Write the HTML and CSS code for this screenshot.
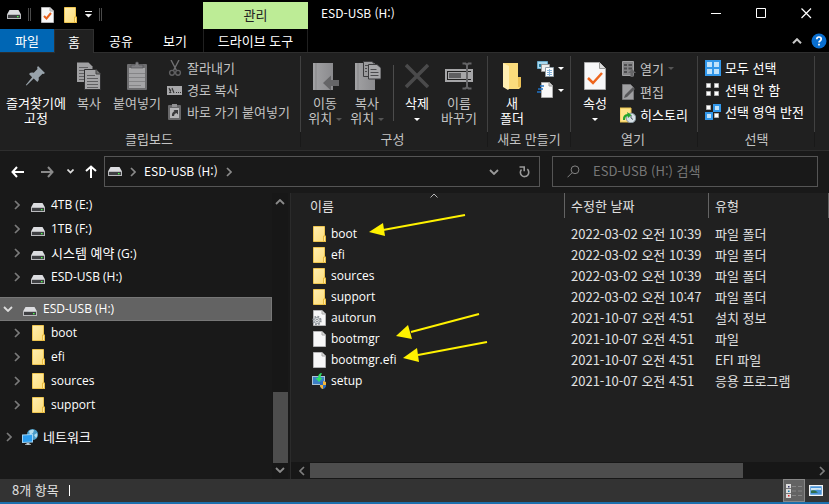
FILE: index.html
```html
<!DOCTYPE html>
<html lang="ko">
<head>
<meta charset="utf-8">
<title>ESD-USB (H:)</title>
<link rel="stylesheet" href="styles.css">
</head>
<body>
<svg class="defs" aria-hidden="true">
  <linearGradient id="gFolder" x1="0" y1="0" x2="1" y2="1"><stop offset="0" stop-color="#ffeeb0"/><stop offset="1" stop-color="#fcdc78"/></linearGradient>
  <linearGradient id="gGrey" x1="0" y1="0" x2="1" y2="0"><stop offset="0" stop-color="#a2a2a4"/><stop offset="1" stop-color="#8b8b8e"/></linearGradient>
  <symbol id="drive" viewBox="0 0 14 9">
    <path d="M2.500 0h9L14 4.500H0z" fill="#dcdde0"/>
    <path d="M0 4h14v5H0z" fill="#b9babd"/>
    <path d="M1 5h12v3H1z" fill="#3f4043"/>
    <path d="M10 6h1.500v1.300H10z" fill="#4cff4c"/>
  </symbol>
  <symbol id="folder" viewBox="0 0 13 16">
    <path d="M.5.5h11v9.500h1v5.500H.5z" fill="url(#gFolder)" stroke="#eec550"/>
    <path d="M10.500 15v-5h2v5.500h-2z" fill="#ffe9a0" stroke="#e9bb3f"/>
  </symbol>
  <symbol id="page" viewBox="0 0 13 16">
    <path d="M.5.5h8.500l3.500 3.500v11.500H.5z" fill="#f7f7f8" stroke="#b4b4b6"/>
    <path d="M9 .5v3.500h3.500" fill="#ddd" stroke="#aaa"/>
  </symbol>
  <symbol id="chev" viewBox="0 0 6 10"><path d="M1 1l4 4-4 4" fill="none" stroke="currentColor" stroke-width="1.700"/></symbol>
  <symbol id="chevd" viewBox="0 0 10 6"><path d="M1 1l4 4 4-4" fill="none" stroke="currentColor" stroke-width="1.800"/></symbol>
  <symbol id="tri" viewBox="0 0 6 3"><path d="M0 0h6L3 3z" fill="currentColor"/></symbol>
</svg>

<div class="window">
  <header class="top">
    <div class="quick">
      <svg class="drive"><use href="#drive"/></svg>
      <i class="grip"></i>
      <button class="bare q-doc" aria-label="속성"><svg width="13" height="16"><use href="#page"/><path d="M3 9l2.500 2.500L10 6" fill="none" stroke="#e8601c" stroke-width="2"/></svg></button>
      <button class="bare q-fold" aria-label="새 폴더"><svg width="13" height="16"><use href="#folder"/></svg></button>
      <button class="bare q-more" aria-label="사용자 지정"><svg width="7" height="7" viewBox="0 0 7 7"><path d="M0 0h7v1H0zM0 3h7L3.500 6.500z" fill="#eee"/></svg></button>
      <i class="grip"></i>
    </div>
    <div class="context">관리</div>
    <div class="title">ESD-USB (H:)</div>
    <div class="controls">
      <button class="bare" aria-label="최소화"><svg width="11" height="11"><path d="M0 5.500h10" stroke="#fff"/></svg></button>
      <button class="bare" aria-label="최대화"><svg width="11" height="11"><path d="M.5.5h9v9h-9z" fill="none" stroke="#fff"/></svg></button>
      <button class="bare" aria-label="닫기"><svg width="11" height="11"><path d="M.5.5l9.500 9.500M10 .5L.5 10" stroke="#fff" stroke-width="1.200"/></svg></button>
    </div>
  </header>

  <nav class="tabs">
    <button class="tab file">파일</button>
    <button class="tab active">홈</button>
    <button class="tab">공유</button>
    <button class="tab">보기</button>
    <button class="tab tool">드라이브 도구</button>
    <div class="tab-end">
      <button class="bare" aria-label="리본 최소화"><svg width="10" height="6" viewBox="0 0 10 6"><path d="M1 5.200l4-4 4 4" fill="none" stroke="#c8c8c8" stroke-width="2"/></svg></button>
      <button class="bare" aria-label="도움말"><svg width="16" height="16"><circle cx="8" cy="8" r="7.500" fill="#0a6fd0"/><path d="M5.800 6.200q0-2.200 2.200-2.200t2.200 2q0 1.200-1.200 1.900-1 .6-1 1.600" fill="none" stroke="#fff" stroke-width="1.700"/><path d="M7.100 10.700h1.800v1.700H7.100z" fill="#fff"/></svg></button>
    </div>
  </nav>

  <section class="ribbon">
    <div class="group g-clip">
      <div class="tools">
        <button class="big w64 on"><svg width="22" height="22" viewBox="0 0 22 22"><path d="M13 1l7 7-1.500 1-1-.3-3.800 3.800q.8 3-1.300 4.600L8.700 13.400 1.500 20.500.8 20l6.300-7.800L4 9q1.800-2 4.800-1.200L12.500 4l-.4-1.500z" fill="#98a3ab"/></svg><span>즐겨찾기에<br>고정</span></button>
        <button class="big w42"><svg width="24" height="28" viewBox="0 0 24 28"><path d="M0 .5h11.500l4 4V20H0z" fill="#a0a0a2"/><path d="M2 5.500h9M2 8.500h9M2 11.500h6M2 14.500h6M2 17.500h6" stroke="#606062"/><path d="M7.500 7.500h11.500l4.500 4.500v15.500h-16z" fill="#a5a5a7" stroke="#303032"/><path d="M19 7.500V12h4.500" fill="#777" stroke="#444"/><path d="M10 13.500h8M10 16.500h11M10 19.500h11M10 22.500h11M10 25.500h11" stroke="#606062"/></svg><span>복사</span></button>
        <button class="big w54"><svg width="20" height="28" viewBox="0 0 20 28"><rect y="2" width="20" height="26" rx="1" fill="#6e6e70"/><path d="M2 6h16v20H2z" fill="#a5a5a7"/><path d="M2 11.500h16M2 15.500h16M2 19.500h16M2 23.500h12" stroke="#858587"/><path d="M4 6V3h4l1-3h2l1 3h4v3z" fill="#7d7d80" stroke="#4b4b4d" stroke-width=".6"/></svg><span>붙여넣기</span></button>
        <div class="smalls">
          <button class="small"><svg width="16" height="16" viewBox="0 0 16 16"><path d="M4 0l5.500 10.500M12 0L6.500 10.500" stroke="#707072" stroke-width="1.400"/><circle cx="5" cy="12.800" r="2.400" fill="none" stroke="#606062" stroke-width="1.400"/><circle cx="11" cy="12.800" r="2.400" fill="none" stroke="#606062" stroke-width="1.400"/></svg>잘라내기</button>
          <button class="small"><svg width="16" height="16" viewBox="0 0 16 16"><path d="M0 4h15v9H0z" fill="#a8a8aa"/><path d="M2 6l2 5M5 6l2 5M2.500 11L4 7.500M9 10.500h1M11 10.500h1M13 10.500h1" stroke="#333" stroke-width="1.100"/></svg>경로 복사</button>
          <button class="small"><svg width="16" height="16" viewBox="0 0 16 16"><rect x="1" y="1" width="13" height="15" rx="1" fill="#68686a"/><path d="M3 4h9v10H3z" fill="#b5b5b7"/><path d="M5 0h5v3H5z" fill="#909092"/><path d="M5 12q-.5-3.500 2.500-5L6.500 6H11v4.500L9.500 9Q7 9.500 7 12z" fill="#3a3a3c"/></svg>바로 가기 붙여넣기</button>
        </div>
      </div>
      <div class="caption">클립보드</div>
    </div>

    <div class="group g-org">
      <div class="tools">
        <button class="big w42"><svg width="28" height="30" viewBox="0 0 28 30"><path d="M2 2h20v27H2z" fill="url(#gGrey)"/><path d="M5 2v27" stroke="#858587"/><path d="M12 22l8-7.500v4.500h8v6h-8v4.500z" fill="#656567"/></svg><span>이동<br>위치 <svg class="tri"><use href="#tri"/></svg></span></button>
        <button class="big w42"><svg width="28" height="30" viewBox="0 0 28 30"><path d="M2 2h20v27H2z" fill="url(#gGrey)"/><path d="M5 2v27" stroke="#858587"/><path d="M10.500.5H19l3 3v12H10.500z" fill="#9b9b9d" stroke="#3c3c3e"/><path d="M15.500 3.500H24l4 3.500v11H15.500z" fill="#a7a7a9" stroke="#3c3c3e"/><path d="M17.500 8.500h6M17.500 11.500h8M17.500 14.500h8M12 4.500h3M12 7.500h2M12 10.500h2" stroke="#4c4c4e"/></svg><span>복사<br>위치 <svg class="tri"><use href="#tri"/></svg></span></button>
        <i class="rule"></i>
        <button class="big w42 on"><svg width="24" height="24" viewBox="0 0 24 24"><path d="M1 1l22 22M23 1L1 23" stroke="#4a4a4b" stroke-width="3.500"/></svg><span>삭제<br><svg class="tri"><use href="#tri"/></svg></span></button>
        <button class="big w42"><svg width="28" height="28" viewBox="0 0 28 28"><path d="M1 8h26v11H1z" fill="none" stroke="#a6a6a8" stroke-width="2"/><path d="M3 10h23v7H3z" fill="#a6a6a8"/><path d="M4 11h12v5H4z" fill="#5f5f61"/><path d="M17.500 1.500h3l1.500 1.500 1.500-1.500h3M22 2.500v23M17.500 26.500h3L22 25l1.500 1.500h3" fill="none" stroke="#656567" stroke-width="2"/></svg><span>이름<br>바꾸기</span></button>
      </div>
      <div class="caption">구성</div>
    </div>

    <div class="group g-new">
      <div class="tools">
        <button class="big w36 on"><svg width="20" height="28" viewBox="0 0 20 28"><path d="M1 1h15v14h3v10l-2 2H6z" fill="#fbdc7c"/><path d="M1 1l6 3v23l-1 1-5-3z" fill="#ffeeb2"/><path d="M16 15h3v10h-3z" fill="#ecc155"/></svg><span>새<br>폴더</span></button>
        <div class="smalls">
          <button class="small on" aria-label="새 항목"><svg width="18" height="18" viewBox="0 0 18 18"><path d="M.5 2.500h10v7H.5z" fill="#a9d8ee" stroke="#68a8c8"/><path d="M2 5h3v3H2z" fill="#257b9c"/><path d="M4.500 5.500h8v7h-8z" fill="#eee" stroke="#999"/><path d="M8.500 8.500h8v9h-8z" fill="#fff" stroke="#8d9ba5"/><path d="M10 11.500h5M10 13.500h5M10 15.500h5M12.500 10v7" stroke="#84b4dd"/></svg><svg class="tri"><use href="#tri"/></svg></button>
          <button class="small on" aria-label="빠른 연결"><svg width="18" height="18" viewBox="0 0 18 18"><path d="M4.500 1.500h8l3 3v12h-11z" fill="#f8f8f8" stroke="#aaa"/><path d="M12 1.500v3.500h3.500" fill="#ccc" stroke="#999"/><path d="M3 5h4M1 8h5M0 11h4" stroke="#1f72c4" stroke-width="1.600"/></svg><svg class="tri"><use href="#tri"/></svg></button>
        </div>
      </div>
      <div class="caption">새로 만들기</div>
    </div>

    <div class="group g-open">
      <div class="tools">
        <button class="big w40 on"><svg width="22" height="28" viewBox="0 0 22 28"><path d="M.5.5h15l6 6v21H.5z" fill="#f7f7f8" stroke="#aaa"/><path d="M15.500.5v6h6" fill="#ddd" stroke="#999"/><path d="M4 16l5 5 9-10" fill="none" stroke="#ee651d" stroke-width="2.500"/></svg><span>속성<br><svg class="tri"><use href="#tri"/></svg></span></button>
        <div class="smalls tall">
          <button class="small"><svg width="16" height="16" viewBox="0 0 16 16"><path d="M2.500.5h11v14h-11z" fill="#858587" stroke="#a1a1a3"/><path d="M4 3h3v2H4zM4 6.500h3v2H4zM4 10h3v2H4zM8.500 3H12v2H8.500zM8.500 6.500H12v2H8.500z" fill="#4d4d4f"/><path d="M12 8l4 4h-2.500v4h-3v-4H8z" fill="#666668"/></svg><span>열기</span><svg class="tri dim"><use href="#tri"/></svg></button>
          <button class="small"><svg width="16" height="16" viewBox="0 0 16 16"><path d="M2.500.5h8l3 3v12h-11z" fill="#a0a0a2" stroke="#78787a"/><path d="M4 14l1-3 8-8 2 2-8 8z" fill="#58585a"/></svg>편집</button>
          <button class="small on"><svg width="16" height="16" viewBox="0 0 16 16"><path d="M0 1h11v14H0z" fill="#ffe489" stroke="#e9c24c"/><circle cx="11" cy="11" r="4.800" fill="#d6e0e6" stroke="#8796a0"/><path d="M11 8v3l2 1.500" fill="none" stroke="#4b5962"/><path d="M3 13q-.5-5.500 4.500-6l-.5-2L11.500 8 8 11l-.5-2Q5 9.500 5 13z" fill="#24a42c"/></svg>히스토리</button>
        </div>
      </div>
      <div class="caption">열기</div>
    </div>

    <div class="group g-sel">
      <div class="tools">
        <div class="smalls">
          <button class="small on"><svg width="16" height="16" viewBox="0 0 16 16"><path d="M0 0h16v16H0z" fill="#3197ea"/><path d="M2 2h5v5H2zM9 2h5v5H9zM2 9h5v5H2zM9 9h5v5H9z" fill="#bfe2fb"/></svg>모두 선택</button>
          <button class="small on"><svg width="16" height="16" viewBox="0 0 16 16"><path d="M1.500 1.500h4v4h-4zM9.500 1.500h4v4h-4zM1.500 9.500h4v4h-4zM9.500 9.500h4v4h-4z" fill="#fff" stroke="#b0b0b0"/></svg>선택 안 함</button>
          <button class="small on"><svg width="16" height="16" viewBox="0 0 16 16"><path d="M8 0h8v8H8zM0 8h8v8H0z" fill="#3197ea"/><path d="M10 2h4v4h-4zM2 10h4v4H2z" fill="#bfe2fb"/><path d="M1.500 1.500h4v4h-4zM9.500 9.500h4v4h-4z" fill="#fff" stroke="#b0b0b0"/></svg>선택 영역 반전</button>
        </div>
      </div>
      <div class="caption">선택</div>
    </div>
  </section>

  <div class="navbar">
    <div class="arrows">
      <button class="bare" aria-label="뒤로"><svg width="13" height="12"><path d="M6 1L1.500 6 6 11M1.500 6H13" fill="none" stroke="#fff" stroke-width="2"/></svg></button>
      <button class="bare" aria-label="앞으로"><svg width="13" height="12"><path d="M7 1l4.500 5L7 11M11.500 6H0" fill="none" stroke="#8a8a8a" stroke-width="2"/></svg></button>
      <button class="bare thin" aria-label="최근 위치"><svg width="7" height="5"><path d="M.5.5l3 3 3-3" fill="none" stroke="#ddd" stroke-width="1.700"/></svg></button>
      <button class="bare thin" aria-label="위로"><svg width="12" height="13"><path d="M1 6l5-4.500L11 6M6 1.500V13" fill="none" stroke="#fff" stroke-width="2"/></svg></button>
    </div>
    <div class="address">
      <svg class="drive"><use href="#drive"/></svg>
      <svg class="crumb"><use href="#chev"/></svg>
      <a href="#h">ESD-USB (H:)</a>
      <svg class="crumb"><use href="#chev"/></svg>
      <button class="bare drop" aria-label="이전 위치"><svg width="10" height="6"><use href="#chevd"/></svg></button>
      <button class="bare reload" aria-label="새로 고침"><svg width="11" height="12" viewBox="0 0 11 12"><path d="M8.300 3.200a4.200 4.200 0 1 1-5.800.3M.5 1h4.700v4.300" fill="none" stroke="#9a9a9a" stroke-width="1.600"/></svg></button>
    </div>
    <label class="search">
      <svg width="13" height="13"><circle cx="8" cy="4.800" r="3.900" fill="none" stroke="#838383"/><path d="M5 7.800L.5 12.300" stroke="#838383"/></svg>
      <input type="search" aria-label="검색" placeholder="ESD-USB (H:) 검색">
    </label>
  </div>

  <main class="body">
    <aside class="side">
      <nav class="tree">
        <div class="branch">
          <a href="#e" class="l2"><svg class="chev"><use href="#chev"/></svg><svg class="drive"><use href="#drive"/></svg>4TB (E:)</a>
          <a href="#f" class="l2"><svg class="chev"><use href="#chev"/></svg><svg class="drive"><use href="#drive"/></svg>1TB (F:)</a>
          <a href="#g" class="l2"><svg class="chev"><use href="#chev"/></svg><svg class="drive"><use href="#drive"/></svg><span><span class="ko">시스템 예약</span> (G:)</span></a>
          <a href="#h" class="l2"><svg class="chev"><use href="#chev"/></svg><svg class="drive"><use href="#drive"/></svg>ESD-USB (H:)</a>
        </div>
        <div class="branch">
          <a href="#h" class="l1 selected"><svg class="chevd"><use href="#chevd"/></svg><svg class="drive"><use href="#drive"/></svg>ESD-USB (H:)</a>
          <a href="#boot" class="l2"><svg class="chev"><use href="#chev"/></svg><svg class="folder"><use href="#folder"/></svg>boot</a>
          <a href="#efi" class="l2"><svg class="chev"><use href="#chev"/></svg><svg class="folder"><use href="#folder"/></svg>efi</a>
          <a href="#sources" class="l2"><svg class="chev"><use href="#chev"/></svg><svg class="folder"><use href="#folder"/></svg>sources</a>
          <a href="#support" class="l2"><svg class="chev"><use href="#chev"/></svg><svg class="folder"><use href="#folder"/></svg>support</a>
        </div>
        <div class="branch">
          <a href="#net" class="l1 ko"><svg class="chev"><use href="#chev"/></svg><svg class="net" viewBox="0 0 16 16"><circle cx="10.500" cy="5.500" r="5.500" fill="#4a9cc8"/><path d="M7 2q3-2 5-1l-1 3-3 2zM12 6l3-2q1 3-1 5z" fill="#b5dcec"/><path d="M0 5.500l11-.5v8.500L0 14z" fill="#9fd4f5"/><path d="M1 6.500l9-.5v6.500l-9 .5z" fill="#2a9df0"/><path d="M4.500 14h3v1.200H9V16H3v-.8h1.500z" fill="#b9c6cd"/></svg>네트워크</a>
        </div>
      </nav>
      <div class="vbar">
        <svg width="10" height="6" viewBox="0 0 10 6"><path d="M1 5l4-4 4 4" fill="none" stroke="currentColor" stroke-width="1.800"/></svg>
        <div class="vtrack"><div class="vthumb"></div></div>
        <svg width="10" height="6"><use href="#chevd"/></svg>
      </div>
    </aside>

    <section class="files">
      <div class="list">
        <table>
          <colgroup><col class="c-name"><col class="c-date"><col></colgroup>
          <thead><tr>
            <th>이름<svg class="sort" viewBox="0 0 8 5"><path d="M.5 4.500L4 1l3.500 3.500" fill="none" stroke="#b5b5b5"/></svg></th><th>수정한 날짜</th><th>유형</th>
          </tr></thead>
          <tbody>
            <tr><td><span class="name"><svg class="folder"><use href="#folder"/></svg>boot</span></td><td>2022-03-02 오전 10:39</td><td>파일 폴더</td></tr>
            <tr><td><span class="name"><svg class="folder"><use href="#folder"/></svg>efi</span></td><td>2022-03-02 오전 10:39</td><td>파일 폴더</td></tr>
            <tr><td><span class="name"><svg class="folder"><use href="#folder"/></svg>sources</span></td><td>2022-03-02 오전 10:39</td><td>파일 폴더</td></tr>
            <tr><td><span class="name"><svg class="folder"><use href="#folder"/></svg>support</span></td><td>2022-03-02 오전 10:47</td><td>파일 폴더</td></tr>
            <tr><td><span class="name"><svg class="folder open"><use href="#page"/><circle cx="4" cy="10.500" r="3.800" fill="#e8e8e8" stroke="#8c9298" stroke-width="1.800" stroke-dasharray="1.700 1.280"/><circle cx="4" cy="10.500" r="3" fill="#e2e4e6" stroke="#8c9298" stroke-width=".8"/><circle cx="4" cy="10.500" r="1.200" fill="#fff" stroke="#8c9298"/></svg>autorun</span></td><td>2021-10-07 오전 4:51</td><td>설치 정보</td></tr>
            <tr><td><span class="name"><svg class="folder"><use href="#page"/></svg>bootmgr</span></td><td>2021-10-07 오전 4:51</td><td>파일</td></tr>
            <tr><td><span class="name"><svg class="folder"><use href="#page"/></svg>bootmgr.efi</span></td><td>2021-10-07 오전 4:51</td><td>EFI 파일</td></tr>
            <tr><td><span class="name"><svg class="folder open"><path d="M-1 3h13v9H-1z" fill="#a9c3d6"/><path d="M0 4h11v7H0z" fill="#3b7fc4"/><path d="M8 0Q5 1 5 5H2.500L6 9l3.500-4H7.500Q7.500 2 9 .5z" fill="#2fdf67"/><path d="M7 9l3-1 3 1v3q0 3-3 4-3-1-3-4z" fill="#2d6cc0"/><path d="M10 8l3 1v3h-3zM7 12h3v4q-3-1-3-4z" fill="#f3b53a"/></svg>setup</span></td><td>2021-10-07 오전 4:51</td><td>응용 프로그램</td></tr>
          </tbody>
        </table>
        <svg class="marks" viewBox="0 0 130 160" aria-hidden="true">
          <g fill="#fff200" stroke="#fff200" stroke-width="2">
            <path d="M96 2L14 17" fill="none"/><path d="M0 19l14-9 2 13z" stroke="none"/>
            <path d="M110 101L42 119" fill="none"/><path d="M27 123l12-11 4 14z" stroke="none"/>
            <path d="M118 129L49 142" fill="none"/><path d="M34 145l14-10 2 14z" stroke="none"/>
          </g>
        </svg>
      </div>
      <div class="hbar">
        <svg width="6" height="10" viewBox="0 0 6 10"><path d="M5 1L1 5l4 4" fill="none" stroke="currentColor" stroke-width="1.700"/></svg>
        <div class="htrack"><div class="hthumb"></div></div>
        <svg width="6" height="10"><use href="#chev"/></svg>
      </div>
    </section>
  </main>

  <footer class="status">
    <span class="count">8개 항목</span>
    <button class="bare view on" aria-label="자세히"><svg width="18" height="14" viewBox="0 0 18 14"><path d="M1 0h5v14H1z" fill="#ddd"/><path d="M1 4.500h5M1 9.500h5" stroke="#777"/><path d="M3 2h1.500v1.500H3z" fill="#336"/><path d="M3 6.500h1.500V8H3z" fill="#17a"/><path d="M3 11h1.500v1.500H3z" fill="#d22"/><path d="M7 2.500h4M13 2.500h4M7 7h4M13 7h4M7 11.500h4M13 11.500h4" stroke="#858585"/></svg></button>
    <button class="bare view" aria-label="큰 아이콘"><svg width="14" height="11" viewBox="0 0 14 11"><path d="M.5.5h13v10H.5z" fill="#4a94d8" stroke="#f4f4f4" stroke-width="1.500"/><path d="M2 3h10v2q-5-1-10 1z" fill="#d0e7f4"/><path d="M2 5.500q4-1 7 2L6 8H2z" fill="#2e6d4c"/></svg></button>
  </footer>
</div>
</body>
</html>
```
FILE: styles.css
```css
* { box-sizing: border-box; }
body {
  margin: 0;
  background: #191919;
  color: #fff;
  font: 13px/16px "Noto Sans CJK KR", sans-serif;
}
button {
  margin: 0; padding: 0; border: 0;
  background: none; color: inherit; font: inherit;
}
a { color: inherit; text-decoration: none; }
svg { display: block; flex: none; }
.defs { position: absolute; width: 0; height: 0; }
.bare { display: flex; align-items: center; justify-content: center; }
.drive { width: 14px; height: 9px; }
.folder { width: 13px; height: 16px; }
.open { overflow: visible; }
.tri { width: 6px; height: 3px; }

.window { display: flex; flex-direction: column; height: 100vh; border-bottom: 2px solid #1b6fad; }

.top { display: flex; height: 29px; background: #000; }
.quick { display: flex; align-items: center; width: 203px; padding-left: 7px; }
.grip { width: 3px; height: 13px; margin-left: 7px; border: solid #4a4a4a; border-width: 0 1px; }
.q-doc, .q-fold { margin-left: 10px; }
.q-more { margin-left: 8px; }
.context { width: 105px; margin-top: 2px; background: #bdec96; color: #222; line-height: 26px; text-align: center; }
.title { flex: 1; padding-left: 13px; line-height: 26px; font-size: 12px; }
.controls { display: flex; }
.controls button { width: 45px; height: 27px; }

.tabs { display: flex; height: 24px; background: #000; border-bottom: 1px solid #2e2e2e; }
.tab { width: 54px; height: 23px; line-height: 20px; }
.tab.file { background: #0066b4; }
.tab.active { width: 40px; height: 24px; background: #202020; border: solid #303030; border-width: 1px 1px 0; }
.tab.tool { width: 105px; margin-left: 1px; border: solid #202020; border-width: 0 1px; }
.tab-end { display: flex; gap: 9px; margin-left: auto; padding-right: 2px; }

.ribbon { display: flex; height: 98px; background: #202020; border-bottom: 1px solid #2e2e2e; }
.group {
  display: flex; flex-direction: column;
  background: linear-gradient(#414141 76px, #191919 76px) right 3px / 1px 91px no-repeat;
}
.g-clip { width: 301px; padding-left: 4px; }
.g-org { width: 187px; padding-left: 3px; }
.g-new { width: 83px; padding-left: 6px; }
.g-open { width: 127px; padding-left: 4px; }
.g-sel { width: 117px; padding-left: 7px; }
.tools { display: flex; height: 78px; padding-top: 4px; }
.caption { padding-right: 7px; color: #c4c4c4; text-align: center; white-space: nowrap; }
.big { display: flex; flex-direction: column; align-items: center; color: #c4c4c4; line-height: 15px; white-space: nowrap; }
.big > svg { height: 38px; }
.big .tri { display: inline-block; vertical-align: middle; color: #555; }
.big.on, .big.on .tri { color: #fff; }
.w36 { width: 36px; } .w40 { width: 40px; } .w42 { width: 42px; } .w54 { width: 54px; } .w64 { width: 64px; }
.rule { width: 1px; height: 56px; margin: 8px 2px 0 5px; background: #4c4c4c; }
.smalls { display: flex; flex-direction: column; padding-left: 3px; }
.small { display: flex; align-items: center; gap: 4px; height: 22px; color: #c4c4c4; white-space: nowrap; }
.tall .small { height: 23px; }
.small.on { color: #fff; }
.dim { color: #555; }
.g-new .smalls { padding-left: 7px; }
.g-new .small { gap: 3px; }
.g-open .smalls { padding-left: 5px; }
.g-sel .smalls { padding-left: 0; }

.navbar { display: flex; align-items: center; height: 42px; padding: 0 11px 1px 0; }
.arrows { display: flex; width: 104px; padding-left: 2px; }
.arrows button { width: 30px; }
.arrows .thin { width: 23px; }
.arrows .thin:nth-child(3) { width: 17px; }
.address, .search { display: flex; align-items: center; height: 31px; border: 1px solid #555; }
.address { flex: 1; padding-left: 3px; font-size: 12px; }
.address a { line-height: 14px; padding-bottom: 2px; }
.crumb { width: 6px; height: 10px; margin: 0 8px; color: #8a8a8a; }
.drop { width: 30px; margin-left: auto; align-self: stretch; color: #9a9a9a; }
.reload { width: 30px; align-self: stretch; }
.search { width: 266px; margin-left: 12px; padding-left: 14px; gap: 13px; }
.search input { flex: 1; min-width: 0; padding: 0 0 2px; border: 0; background: none; color: #fff; font: inherit; }
.search input::placeholder { color: #777; opacity: 1; }

.body { display: flex; flex: 1; min-height: 0; }
.side { display: flex; width: 291px; border-right: 1px solid #2b2b2b; }
.tree { display: flex; flex-direction: column; gap: 8px; flex: 1; font: 12px/16px "Open Sans", "Noto Sans CJK KR", sans-serif; }
.tree a { display: flex; align-items: center; height: 24px; }
.l2 { padding-left: 14px; }
.l1 { padding-left: 6px; }
.chev { width: 6px; height: 10px; margin-right: 11px; color: #7a7a7a; }
.tree .drive { margin: 5px 6px 0 0; }
.tree .folder { margin: 0 6px 0 1px; }
.tree .ko { font-family: "Noto Sans CJK KR", sans-serif; font-size: 13px; }
.net { width: 16px; height: 16px; margin: 0 5px 0 -1px; }
.tree .selected { padding-left: 3px; background: #636363; border: 1px solid #777; border-left: 0; }
.chevd { width: 10px; height: 6px; margin-right: 10px; color: #ddd; }
.vbar { display: flex; flex-direction: column; align-items: center; width: 16px; margin-right: 2px; padding: 6px 0; background: #171717; color: #8a8a8a; }
.vtrack { display: flex; flex-direction: column; justify-content: flex-end; flex: 1; width: 100%; padding: 5px 0 4px 1px; }
.vthumb { height: 28%; background: #4d4d4d; }

.files { display: flex; flex-direction: column; flex: 1; min-width: 0; background: #202020; }
.list { position: relative; flex: 1; min-height: 0; }
table { width: 100%; table-layout: fixed; border-collapse: separate; border-spacing: 0; }
.c-name { width: 274px; }
.c-date { width: 144px; }
th, td { padding: 0 0 0 6px; text-align: left; font-weight: 400; white-space: nowrap; }
th { position: relative; height: 25px; border-right: 1px solid #636363; color: #e0e0e0; }
th:first-child, td:first-child { padding-left: 19px; }
.sort { position: absolute; top: 0; right: 126px; width: 8px; height: 5px; }
tbody::before { content: ""; display: block; height: 5px; }
td { height: 21px; color: #e0e0e0; }
.name { display: flex; align-items: center; gap: 5px; padding-left: 3px; color: #fff; font: 12px/16px "Open Sans", sans-serif; }
.marks { position: absolute; left: 78px; top: 20px; width: 130px; height: 160px; }
.hbar { display: flex; align-items: center; height: 17px; padding: 0 4px 0 8px; background: #171717; color: #7d7d7d; }
.htrack { flex: 1; height: 15px; margin: 0 5px; }
.hthumb { width: 86%; height: 100%; background: #4d4d4d; }

.status { display: flex; height: 23px; padding: 0 2px 0 12px; background: #333; color: #e0e0e0; }
.count { align-self: center; height: 11px; margin-right: auto; padding-right: 10px; border-right: 1px solid #fff; line-height: 10px; }
.view { width: 22px; }
.view.on { background: #636363; border: 1px solid #888; }
```
